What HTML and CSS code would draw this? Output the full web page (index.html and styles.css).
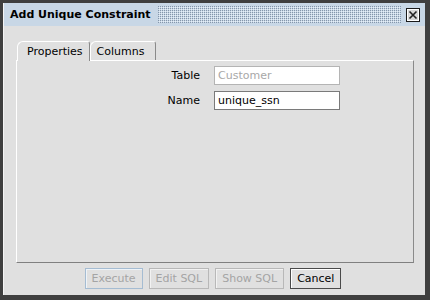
FILE: index.html
```html
<!DOCTYPE html>
<html lang="en">
<head>
  <meta charset="UTF-8" />
  <title>Add Unique Constraint</title>
  <link rel="stylesheet" href="styles.css">
</head>
<body>
  <div class="window">
    <div class="titlebar">
      <span class="title">Add Unique Constraint</span>
      <span class="grip"></span>
      <span class="close">
        <svg width="14" height="14" viewBox="0 0 14 14">
          <rect x="0.5" y="0.5" width="13" height="13" fill="#d8d8d8" stroke="#1a1a1a"/>
          <rect x="1.5" y="1.5" width="11" height="11" fill="none" stroke="#ffffff"/>
          <path d="M3.5 3.5 L10.5 10.5 M10.5 3.5 L3.5 10.5" stroke="#222" stroke-width="1.6"/>
        </svg>
      </span>
    </div>

    <div class="content">
      <div class="tabs">
        <div class="tab active">Properties</div>
        <div class="tab">Columns</div>
      </div>
      <div class="panel">
        <div class="form">
          <label class="label" for="table">Table</label>
          <input class="field disabled" id="table" value="Customer" disabled>
          <label class="label" for="name">Name</label>
          <input class="field" id="name" value="unique_ssn">
        </div>
      </div>

      <div class="buttons">
        <button class="btn default" disabled>Execute</button>
        <button class="btn" disabled>Edit SQL</button>
        <button class="btn" disabled>Show SQL</button>
        <button class="btn enabled">Cancel</button>
      </div>
    </div>
  </div>
</body>
</html>
```

FILE: styles.css
```css
body {
  margin: 0;
  padding: 0;
  font-family: "DejaVu Sans", sans-serif;
  font-size: 11px;
  color: #000;
  background: #e0e0e0;
}

.window {
  width: 430px;
  height: 300px;
  box-sizing: border-box;
  border-style: solid;
  border-color: #3f3f3f;
  border-width: 3px 5px 5px 3px;
  display: flex;
  flex-direction: column;
  background: #e0e0e0;
}

.titlebar {
  height: 23px;
  display: flex;
  align-items: center;
  background: #c8d7e6;
  border-left: 1px solid #f4f4f4;
  padding-left: 6px;
  padding-right: 5px;
}

.title {
  font-weight: bold;
  white-space: nowrap;
}

/* dotted drag area: one dot per 2x2 tile, second layer offset */
.grip {
  flex: 1;
  height: 17px;
  margin: 0 5px 0 7px;
  background:
    conic-gradient(at 1px 1px, transparent 75%, #8596aa 0) 0 0 / 2px 2px,
    conic-gradient(at 1px 1px, transparent 75%, #e6eef6 0) 1px 1px / 2px 2px;
}

.close {
  width: 14px;
  height: 14px;
  display: flex;
}

.content {
  flex: 1;
  display: flex;
  flex-direction: column;
  padding: 15px 11px 0 12px;
  border-left: 1px solid #f4f4f4;
}

.tabs {
  display: flex;
  height: 19px;
  padding-left: 1px;
}

.tab {
  box-sizing: border-box;
  height: 20px;
  padding: 3px 6px 0 9px;
  border: 1px solid #fff;
  border-right-color: #8a8a8a;
  border-bottom: none;
  border-radius: 6px 3px 0 0;
  background: #e0e0e0;
  position: relative;
  z-index: 1;
}

.tab.active {
  z-index: 2;
}

.tab + .tab {
  height: 19px;
  padding-left: 6px;
  padding-right: 11px;
}

.panel {
  height: 203px;
  box-sizing: border-box;
  border: 1px solid #fff;
  border-right-color: #8a8a8a;
  border-bottom-color: #808080;
}

.form {
  display: grid;
  grid-template-columns: 183px 126px;
  column-gap: 14px;
  row-gap: 6px;
  padding-top: 5px;
  align-items: center;
}

.label {
  text-align: right;
}

.field {
  box-sizing: border-box;
  height: 19px;
  padding: 0 3px;
  font-family: "DejaVu Sans", sans-serif;
  font-size: 11px;
  color: #000;
  background: #fff;
  border: 1px solid #7a7a7a;
  outline: none;
}

.field.disabled {
  color: #a8a8a8;
  border-color: #b4b4b4;
}

.buttons {
  display: flex;
  justify-content: center;
  gap: 6px;
  padding-top: 5px;
  padding-right: 4px;
}

.btn {
  height: 21px;
  padding: 0 6px;
  font-family: "DejaVu Sans", sans-serif;
  font-size: 11px;
  color: #a4a4a4;
  background: #e0e0e0;
  border: 1px solid #b8b8b8;
  box-shadow: inset 1px 1px 0 #f2f2f2;
}

.btn.default {
  border-color: #a5bcd2;
  box-shadow: inset 1px 1px 0 #eef3f8;
}

.btn.enabled {
  color: #000;
  border-color: #4a4a4a;
  box-shadow: inset 1px 1px 0 #fff;
}
```
